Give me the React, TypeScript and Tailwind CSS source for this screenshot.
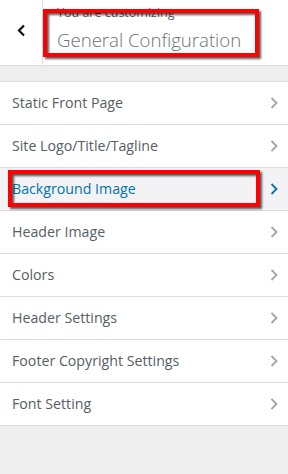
import React from "react";

const sections = [
  "Static Front Page",
  "Site Logo/Title/Tagline",
  "Background Image",
  "Header Image",
  "Colors",
  "Header Settings",
  "Footer Copyright Settings",
  "Font Setting",
];

function Chevron({ color }: { color: string }) {
  return (
    <svg width="8" height="12" viewBox="0 0 8 12" fill="none">
      <polyline points="1.5,1 6.5,6 1.5,11" stroke={color} strokeWidth="1.8" />
    </svg>
  );
}

export default function App() {
  return (
    <div className="relative w-[288px] h-[474px] overflow-hidden bg-[#eeeeee] font-['Open_Sans','Noto_Sans',sans-serif]">
      {/* Header */}
      <div className="flex h-[66px] bg-white border-b border-[#dddddd]">
        <div className="flex w-[43px] items-center justify-center border-r border-[#dddddd] pb-[4px]">
          <svg width="9" height="13" viewBox="0 0 9 13" fill="none">
            <polyline points="7,1.5 2,6.5 7,11.5" stroke="#111" strokeWidth="2.2" />
          </svg>
        </div>
        <div className="pl-[14px] pt-[5px]">
          <div className="text-[12.5px] leading-[16px] text-[#555d66]">You are customizing</div>
          <div className="mt-[7px] text-[18.6px] leading-[24px] font-light text-[#6b7177]">General Configuration</div>
        </div>
      </div>

      <div className="h-[15px]" />

      {/* Sections */}
      <ul className="border-t border-[#dddddd]">
        {sections.map((s) => {
          const active = s === "Background Image";
          return (
            <li
              key={s}
              className={`flex h-[43px] items-center justify-between border-b border-[#dddddd] pl-[12px] pr-[10px] ${
                active ? "bg-[#f3f3f5]" : "bg-white"
              }`}
            >
              <span className={`text-[14.2px] ${active ? "text-[#0073aa]" : "text-[#555d66]"}`}>{s}</span>
              <Chevron color={active ? "#0073aa" : "#a0a5aa"} />
            </li>
          );
        })}
      </ul>

      {/* Annotation boxes */}
      <div className="absolute left-[43px] top-[9px] h-[48px] w-[216px] border-[4px] border-[#ff0000] [filter:drop-shadow(2px_2px_1px_rgba(0,0,0,0.65))]" />
      <div className="absolute left-[8px] top-[170px] h-[37px] w-[252px] border-[4px] border-[#ff0000] [filter:drop-shadow(2px_2px_1px_rgba(0,0,0,0.65))]" />
    </div>
  );
}
